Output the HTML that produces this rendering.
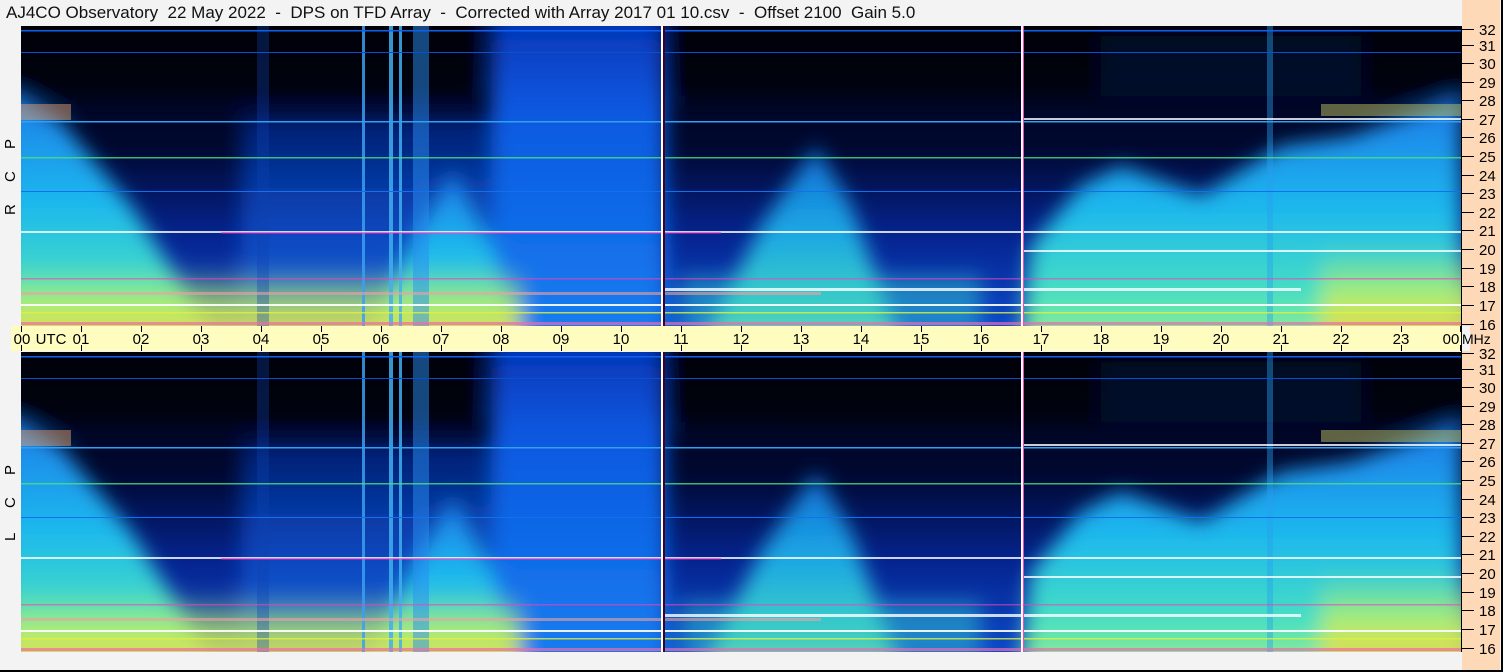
<!DOCTYPE html>
<html><head><style>
html,body{margin:0;padding:0}
body{width:1503px;height:672px;position:relative;background:#f3f3f3;font-family:"Liberation Sans",sans-serif;overflow:hidden}
.frame{position:absolute;left:0;top:0;width:1501px;height:670px;border-right:2px solid #000;border-bottom:2px solid #000;background:#f3f3f3}
.title{position:absolute;left:6px;top:3px;font-size:17px;color:#111;white-space:pre}
svg{position:absolute;left:0;top:0}
</style></head><body>
<div class="frame"></div>
<div class="title">AJ4CO Observatory  22 May 2022  -  DPS on TFD Array  -  Corrected with Array 2017 01 10.csv  -  Offset 2100  Gain 5.0</div>
<svg width="1503" height="672" viewBox="0 0 1503 672" font-family="Liberation Sans, sans-serif">
<defs>
<linearGradient id="bg" x1="0" y1="0" x2="0" y2="1">
<stop offset="0" stop-color="#000214"/><stop offset="0.4" stop-color="#000830"/><stop offset="0.7" stop-color="#052490"/><stop offset="1" stop-color="#0c48c8"/>
</linearGradient>
<linearGradient id="mt" x1="0" y1="0" x2="0" y2="1">
<stop offset="0" stop-color="#1a78e8"/><stop offset="0.45" stop-color="#1cb8ee"/><stop offset="0.8" stop-color="#48e0c0"/><stop offset="1" stop-color="#a8f080"/>
</linearGradient>
<linearGradient id="blu" x1="0" y1="0" x2="0" y2="1">
<stop offset="0" stop-color="#0430b0"/><stop offset="0.3" stop-color="#0c58e0"/><stop offset="1" stop-color="#1680f0"/>
</linearGradient>
<linearGradient id="yl" x1="0" y1="0" x2="0" y2="1">
<stop offset="0" stop-color="#a0f070" stop-opacity="0"/><stop offset="0.5" stop-color="#c8f060" stop-opacity="0.8"/><stop offset="1" stop-color="#f0d040"/>
</linearGradient>
<filter id="bl" x="-20%" y="-20%" width="140%" height="140%"><feGaussianBlur stdDeviation="10"/></filter>
<clipPath id="cp"><rect x="0" y="0" width="1440" height="300"/></clipPath>
<g id="spec">
<g clip-path="url(#cp)">
<rect x="0" y="0" width="1440" height="300" fill="url(#bg)"/>
<g filter="url(#bl)">
<rect x="220" y="90" width="420" height="230" fill="url(#blu)" opacity="0.55"/>
<rect x="470" y="-20" width="175" height="340" fill="url(#blu)"/>
<polygon points="-20,60 40,95 110,180 200,320 -20,320" fill="url(#mt)"/>
<polygon points="340,320 400,200 432,145 470,220 500,320" fill="url(#mt)"/>
<polygon points="680,320 740,200 795,120 830,180 880,320" fill="url(#mt)" opacity="0.9"/>
<polygon points="1000,320 1010,220 1060,160 1100,140 1180,170 1260,120 1330,110 1440,70 1440,320" fill="url(#mt)"/>
<rect x="-20" y="240" width="520" height="80" fill="url(#yl)"/>
<rect x="1300" y="220" width="160" height="100" fill="url(#yl)"/>
<rect x="660" y="250" width="300" height="60" fill="#30c8d0" opacity="0.5"/>
<rect x="1080" y="10" width="260" height="60" fill="#0c40c0" opacity="0.4"/>
<rect x="-20" y="-20" width="480" height="90" fill="#000008" opacity="0.6"/>
<rect x="640" y="-20" width="820" height="90" fill="#000008" opacity="0.6"/>
</g>
<g opacity="0.85">
<rect x="341" y="0" width="3" height="300" fill="#3aa0f0"/>
<rect x="368" y="0" width="4" height="300" fill="#40b0f0"/>
<rect x="378" y="0" width="3" height="300" fill="#40b0f0"/>
<rect x="392" y="0" width="16" height="300" fill="#2a90f0" opacity="0.6"/>
<rect x="1246" y="0" width="6" height="300" fill="#2aa0f0" opacity="0.5"/>
<rect x="236" y="0" width="12" height="300" fill="#1040b0" opacity="0.4"/>
</g>
<g>
<rect x="0" y="4" width="1440" height="1.5" fill="#1060f0"/>
<rect x="0" y="26" width="1440" height="1" fill="#0850d0"/>
<rect x="0" y="78" width="50" height="16" fill="#e0a070" opacity="0.5"/>
<rect x="1300" y="78" width="140" height="12" fill="#c0c060" opacity="0.5"/>
<rect x="0" y="95" width="1440" height="1.5" fill="#30a0f0"/>
<rect x="1000" y="92" width="440" height="2" fill="#ffffff" opacity="0.8"/>
<rect x="0" y="131" width="1440" height="1.5" fill="#50e080" opacity="0.8"/>
<rect x="0" y="165" width="1440" height="1" fill="#1070f0"/>
<rect x="0" y="205" width="1440" height="2" fill="#ffffff" opacity="0.8"/>
<rect x="200" y="206" width="500" height="1.5" fill="#ff40c0" opacity="0.7"/>
<rect x="1000" y="224" width="440" height="2" fill="#ffffff" opacity="0.8"/>
<rect x="0" y="252" width="1440" height="1.5" fill="#f040c0" opacity="0.6"/>
<rect x="640" y="262" width="640" height="3" fill="#ffffff" opacity="0.8"/>
<rect x="0" y="266" width="800" height="3" fill="#f0a0a0" opacity="0.6"/>
<rect x="0" y="278" width="1440" height="2" fill="#ffffff" opacity="0.9"/>
<rect x="0" y="286" width="1440" height="1.5" fill="#e0f040" opacity="0.8"/>
<rect x="0" y="296" width="1440" height="3" fill="#f06ab0" opacity="0.7"/>
</g>
<rect x="640" y="0" width="2" height="300" fill="#ffffff"/>
<rect x="642" y="0" width="2" height="300" fill="#400020"/>
<rect x="1000" y="0" width="2" height="300" fill="#ffffff"/>
<rect x="1002" y="0" width="1" height="300" fill="#ff40c0"/>
</g>
</g>
</defs>
<use href="#spec" x="21" y="26"/>
<use href="#spec" x="21" y="352"/>
<rect x="11" y="326" width="1450" height="25" fill="#fffcc0"/>
<g stroke="#000" stroke-width="1">
<path d="M21.5 326v6M81.5 326v6M141.5 326v6M201.5 326v6M261.5 326v6M321.5 326v6M381.5 326v6M441.5 326v6M501.5 326v6M561.5 326v6M621.5 326v6M681.5 326v6M741.5 326v6M801.5 326v6M861.5 326v6M921.5 326v6M981.5 326v6M1041.5 326v6M1101.5 326v6M1161.5 326v6M1221.5 326v6M1281.5 326v6M1341.5 326v6M1401.5 326v6M1460.5 326v6"/>
<path d="M21.5 345v6M81.5 345v6M141.5 345v6M201.5 345v6M261.5 345v6M321.5 345v6M381.5 345v6M441.5 345v6M501.5 345v6M561.5 345v6M621.5 345v6M681.5 345v6M741.5 345v6M801.5 345v6M861.5 345v6M921.5 345v6M981.5 345v6M1041.5 345v6M1101.5 345v6M1161.5 345v6M1221.5 345v6M1281.5 345v6M1341.5 345v6M1401.5 345v6M1460.5 345v6"/>
</g>
<g font-size="15" fill="#000" text-anchor="middle">
<text x="22" y="344">00</text><text x="51" y="344">UTC</text><text x="81" y="344">01</text><text x="141" y="344">02</text><text x="201" y="344">03</text><text x="261" y="344">04</text><text x="321" y="344">05</text><text x="381" y="344">06</text><text x="441" y="344">07</text><text x="501" y="344">08</text><text x="561" y="344">09</text><text x="621" y="344">10</text><text x="681" y="344">11</text><text x="741" y="344">12</text><text x="801" y="344">13</text><text x="861" y="344">14</text><text x="921" y="344">15</text><text x="981" y="344">16</text><text x="1041" y="344">17</text><text x="1101" y="344">18</text><text x="1161" y="344">19</text><text x="1221" y="344">20</text><text x="1281" y="344">21</text><text x="1341" y="344">22</text><text x="1401" y="344">23</text><text x="1451" y="344">00</text>
</g>
<rect x="1462" y="0" width="38" height="326" fill="#fdd9b8"/>
<rect x="1462" y="351" width="38" height="319" fill="#fdd9b8"/>
<rect x="1470" y="326" width="30" height="25" fill="#fdd9b8"/>
<text x="1462" y="344" font-size="14">MHz</text>
<line x1="1461.5" y1="26" x2="1461.5" y2="652" stroke="#000"/>
<g id="ax">
<g stroke="#000"><path d="M1462 29.5h12M1462 45.5h12M1462 63.5h12M1462 82.5h12M1462 100.5h12M1462 119.5h12M1462 137.5h12M1462 156.5h12M1462 175.5h12M1462 193.5h12M1462 212.5h12M1462 230.5h12M1462 249.5h12M1462 268.5h12M1462 286.5h12M1462 305.5h12M1462 324.5h12"/></g>
<g font-size="15" fill="#000">
<text x="1479" y="35">32</text><text x="1479" y="51">31</text><text x="1479" y="69">30</text><text x="1479" y="88">29</text><text x="1479" y="106">28</text><text x="1479" y="125">27</text><text x="1479" y="143">26</text><text x="1479" y="162">25</text><text x="1479" y="181">24</text><text x="1479" y="199">23</text><text x="1479" y="218">22</text><text x="1479" y="236">21</text><text x="1479" y="255">20</text><text x="1479" y="274">19</text><text x="1479" y="292">18</text><text x="1479" y="311">17</text><text x="1479" y="330">16</text>
</g>
</g>
<use href="#ax" x="0" y="324"/>
<g font-size="15" fill="#000">
<text transform="translate(15,215) rotate(-90)">R</text>
<text transform="translate(15,182) rotate(-90)">C</text>
<text transform="translate(15,149) rotate(-90)">P</text>
<text transform="translate(15,541) rotate(-90)">L</text>
<text transform="translate(15,508) rotate(-90)">C</text>
<text transform="translate(15,475) rotate(-90)">P</text>
</g>
</svg>
</body></html>
